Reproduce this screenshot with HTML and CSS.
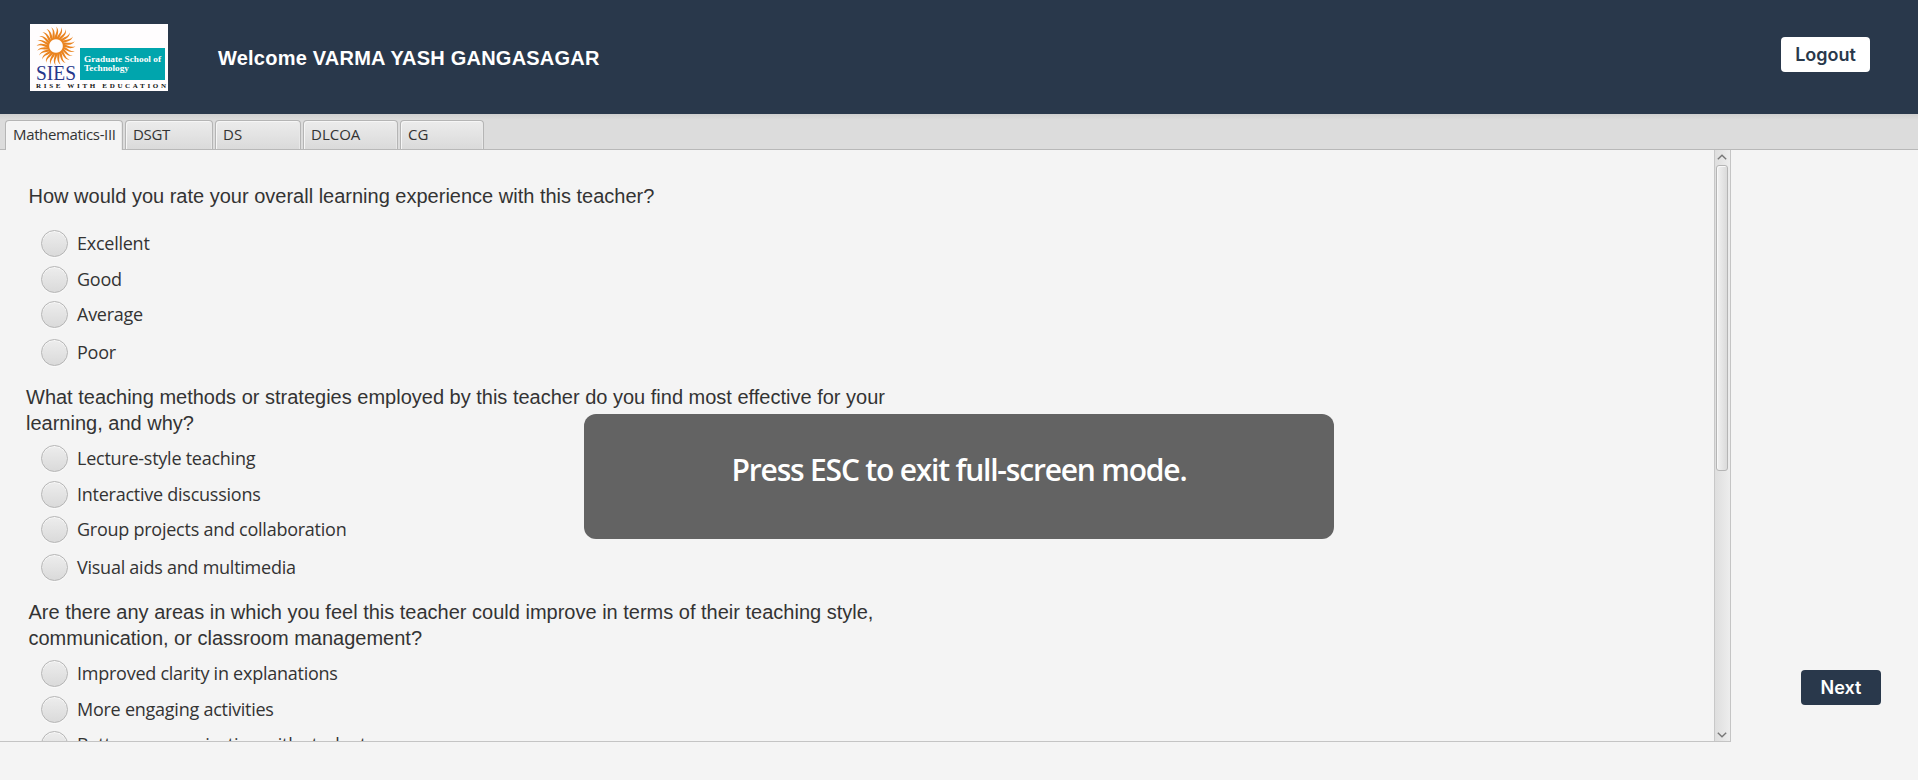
FILE: index.html
```html
<!DOCTYPE html>
<html lang="en">
<head>
<meta charset="utf-8">
<title>Teacher Feedback</title>
<link rel="stylesheet" href="styles.css">
</head>
<body>
<header class="header">
  <svg class="logo" viewBox="0 0 138 67" width="138" height="67" role="img" aria-label="SIES Graduate School of Technology">
    <rect width="138" height="67" fill="#fffdfe"/>
    <defs>
      <g id="ray"><path d="M-1.1 -6.8 C-2.2 -11 2.4 -14 .2 -19.4 C4.2 -15 .8 -11 1.1 -6.8 Z"/></g>
      <g id="rays"><use href="#ray"/><use href="#ray" transform="rotate(15)"/><use href="#ray" transform="rotate(30)"/><use href="#ray" transform="rotate(45)"/><use href="#ray" transform="rotate(60)"/><use href="#ray" transform="rotate(75)"/></g>
    </defs>
    <g transform="translate(26 22)" fill="#ea8420">
      <use href="#rays"/><use href="#rays" transform="rotate(90)"/><use href="#rays" transform="rotate(180)"/><use href="#rays" transform="rotate(270)"/>
    </g>
    <rect x="50" y="24" width="85" height="32" fill="#00a5ad"/>
    <text class="logo-serif" x="6" y="55.7" font-size="20" fill="#26378c" textLength="40" lengthAdjust="spacingAndGlyphs">SIES</text>
    <g class="logo-serif" font-size="8.8" font-weight="bold" fill="#fff">
      <text x="54" y="38" textLength="77" lengthAdjust="spacingAndGlyphs">Graduate School of</text>
      <text x="54" y="46.8" textLength="45" lengthAdjust="spacingAndGlyphs">Technology</text>
    </g>
    <text class="logo-serif" x="6" y="64" font-size="7" font-weight="bold" fill="#111" textLength="130">RISE WITH EDUCATION</text>
  </svg>
  <h1 class="welcome">Welcome VARMA YASH GANGASAGAR</h1>
  <button class="button logout">Logout</button>
</header>
<nav class="tabs">
  <div class="tab tab-selected">Mathematics-III</div>
  <div class="tab tab-dsgt">DSGT</div>
  <div class="tab tab-ds">DS</div>
  <div class="tab tab-dlcoa">DLCOA</div>
  <div class="tab tab-cg">CG</div>
</nav>
<main class="content">
  <div class="pane">
    <div class="questions">
      <section class="block first">
        <p class="question">How would you rate your overall learning experience with this teacher?</p>
        <div class="options">
          <label class="option"><i class="radio"></i><span>Excellent</span></label>
          <label class="option"><i class="radio"></i><span>Good</span></label>
          <label class="option"><i class="radio"></i><span>Average</span></label>
          <label class="option"><i class="radio"></i><span>Poor</span></label>
        </div>
      </section>
      <section class="block second">
        <p class="question">What teaching methods or strategies employed by this teacher do you find most effective for your<br>learning, and why?</p>
        <div class="options">
          <label class="option"><i class="radio"></i><span>Lecture-style teaching</span></label>
          <label class="option"><i class="radio"></i><span>Interactive discussions</span></label>
          <label class="option"><i class="radio"></i><span>Group projects and collaboration</span></label>
          <label class="option"><i class="radio"></i><span>Visual aids and multimedia</span></label>
        </div>
      </section>
      <section class="block">
        <p class="question">Are there any areas in which you feel this teacher could improve in terms of their teaching style,<br>communication, or classroom management?</p>
        <div class="options">
          <label class="option"><i class="radio"></i><span>Improved clarity in explanations</span></label>
          <label class="option"><i class="radio"></i><span>More engaging activities</span></label>
          <label class="option"><i class="radio"></i><span>Better communication with students</span></label>
        </div>
      </section>
    </div>
    <div class="scrollbar">
      <svg class="arrow" width="10" height="6" viewBox="0 0 10 6"><path d="M.8 5.2 5 1.2 9.2 5.2" fill="none" stroke="#777" stroke-width="1.4"/></svg>
      <div class="track"><div class="thumb"></div></div>
      <svg class="arrow" width="10" height="6" viewBox="0 0 10 6"><path d="M.8 .8 5 4.8 9.2 .8" fill="none" stroke="#777" stroke-width="1.4"/></svg>
    </div>
  </div>
  <aside class="side"><button class="button next">Next</button></aside>
</main>
<div class="notice">Press ESC to exit full-screen mode.</div>
</body>
</html>
```
FILE: styles.css
```css
* { box-sizing: border-box; }
body {
  margin: 0;
  height: 780px;
  overflow: hidden;
  background: #f4f4f4;
  color: #333;
  font-family: "Open Sans", sans-serif;
}
.header {
  display: flex;
  align-items: center;
  height: 114px;
  padding: 0 48px 0 30px;
  background: #29384b;
}
.logo { display: block; }
.logo-serif { font-family: "Liberation Serif", serif; }
.welcome {
  margin: 2px 0 0 50px;
  color: #fff;
  font: bold 20px/24px "Liberation Sans", sans-serif;
  letter-spacing: 0.22px;
  white-space: nowrap;
}
.button {
  padding: 0;
  border: 0;
  border-radius: 4px;
  font: 600 18px/34px Inter, sans-serif;
}
.logout {
  width: 89px;
  height: 35px;
  margin: -6px 0 0 auto;
  padding-top: 1px;
  background: #fff;
  color: #29384b;
}
.tabs {
  display: flex;
  gap: 2px;
  height: 36px;
  padding: 6px 0 0 5px;
  border-bottom: 1px solid #b8b8b8;
  background: linear-gradient(#cfcfcf, #dcdcdc 6px, #dcdcdc);
}
.tab {
  height: 29px;
  padding-left: 7px;
  border: 1px solid #b5b5b5;
  border-bottom: 0;
  border-radius: 4px 4px 0 0;
  background: linear-gradient(#ececec, #dadada);
  box-shadow: inset 1px 1px 0 #f6f6f6, inset -1px 0 0 #e8e8e8;
  font-size: 15px;
  line-height: 26px;
  white-space: nowrap;
}
.tab-selected {
  width: 118px;
  height: 30px;
  background: #f4f4f4;
  letter-spacing: -0.35px;
}
.tab-dsgt { width: 88px; letter-spacing: -0.3px; }
.tab-ds { width: 86px; }
.tab-dlcoa { width: 95px; }
.tab-cg { width: 84px; }
.content { display: flex; height: 592px; }
.pane {
  display: flex;
  width: 1731px;
  height: 592px;
  border-right: 1px solid #c4c4c4;
  border-bottom: 1px solid #c4c4c4;
  overflow: hidden;
}
.questions { flex: 1; overflow: hidden; padding-top: 33px; }
.block { padding-bottom: 11px; }
.question {
  margin: 0 0 4px 28.5px;
  font: 20px/26px "Liberation Sans", sans-serif;
  white-space: nowrap;
}
.first .question { margin-bottom: 16px; }
.second .question { margin-left: 26px; }
.options {
  display: grid;
  grid-template-rows: 36px 37px 33px 42px;
  padding-left: 41px;
}
.option {
  display: flex;
  align-items: center;
  gap: 9px;
  font-size: 18px;
  letter-spacing: -0.25px;
  line-height: 24px;
}
.option span { padding-bottom: 1px; }
.radio {
  width: 27px;
  height: 27px;
  border: 1px solid #b5b5b5;
  border-radius: 50%;
  background: linear-gradient(#ededed, #dadada);
  box-shadow: inset 0 1px 0 #f8f8f8, 0 1px 0 #fafafa;
}
.scrollbar {
  display: flex;
  flex-direction: column;
  align-items: center;
  width: 16px;
  padding: 4px 1px 3px 0;
  border-left: 1px solid #c8c8c8;
  background: linear-gradient(90deg, #dedede, #ededed);
}
.arrow { display: block; flex: none; }
.track { flex: 1; padding-top: 5px; }
.thumb {
  width: 12px;
  height: 306px;
  border: 1px solid #b5b5b5;
  border-radius: 3px;
  background: linear-gradient(90deg, #f2f2f2, #dadada);
  box-shadow: inset 1px 1px 0 #f8f8f8;
}
.side { flex: 1; padding: 520px 0 0 70px; }
.next {
  display: block;
  width: 80px;
  height: 35px;
  padding-top: 1px;
  background: #29384b;
  color: #fff;
}
.notice {
  position: absolute;
  left: 584px;
  top: 414px;
  width: 750px;
  height: 125px;
  border-radius: 12px;
  background: #636363;
  color: #fff;
  font: 600 30px/112px "Open Sans", sans-serif;
  letter-spacing: -1.2px;
  text-align: center;
  white-space: nowrap;
}
```
